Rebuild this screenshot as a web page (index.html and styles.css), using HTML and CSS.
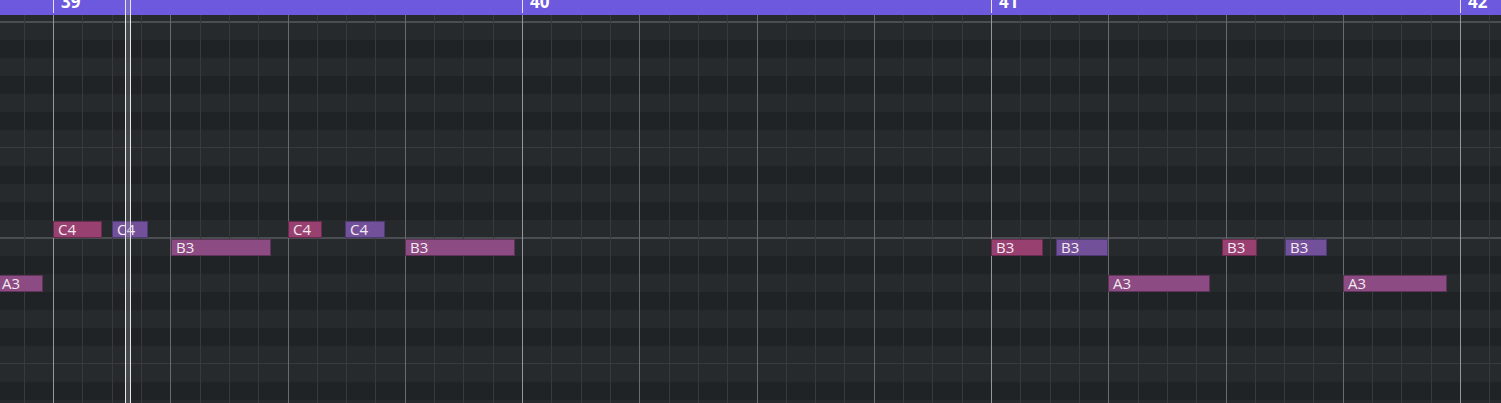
FILE: index.html
```html
<!DOCTYPE html>
<html lang="en">
<head>
    <meta charset="UTF-8">
    <meta name="viewport" content="width=device-width, initial-scale=1.0">
    <title>Piano Roll</title>
    <link rel="stylesheet" href="styles.css">
</head>
<body>
    <div class="roll">
        <!-- 小节标尺 -->
        <div class="ruler" id="ruler"></div>

        <div class="grid">
            <div class="rows" id="rows"></div>
            <div class="cols" id="cols"></div>
            <div class="notes" id="notes"></div>
        </div>

        <!-- 播放头 -->
        <div class="playhead"></div>
    </div>

    <script>
        const rulerEl = document.getElementById('ruler');
        const rowsEl = document.getElementById('rows');
        const colsEl = document.getElementById('cols');
        const notesEl = document.getElementById('notes');

        const bars = [38, 39, 40, 41, 42];
        const pitches = ['C5', 'B4', 'A#4', 'A4', 'G#4', 'G4', 'F#4', 'F4', 'E4', 'D#4', 'D4', 'C#4',
                         'C4', 'B3', 'A#3', 'A3', 'G#3', 'G3', 'F#3', 'F3', 'E3', 'D#3', 'D3'];

        // 音符：音高, 左边 px, 宽度 px, 颜色
        const notes = [
            ['A3', -3, 46, 'mag'],
            ['C4', 53, 49, 'red'],
            ['C4', 112, 36, 'violet'],
            ['B3', 171, 100, 'mag'],
            ['C4', 288, 34, 'red'],
            ['C4', 345, 40, 'violet'],
            ['B3', 405, 110, 'mag'],
            ['B3', 991, 52, 'red'],
            ['B3', 1056, 52, 'violet'],
            ['A3', 1108, 102, 'mag'],
            ['B3', 1222, 35, 'red'],
            ['B3', 1285, 42, 'violet'],
            ['A3', 1343, 104, 'mag']
        ];

        bars.forEach(n => {
            const mark = document.createElement('div');
            mark.className = 'ruler-bar';
            mark.innerHTML = `<span class="bar-num">${n}</span>`;
            rulerEl.appendChild(mark);

            const bar = document.createElement('div');
            bar.className = 'bar';
            for (let b = 0; b < 4; b++) {
                const beat = document.createElement('div');
                beat.className = 'beat';
                for (let s = 0; s < 4; s++) {
                    const step = document.createElement('div');
                    step.className = 'step';
                    beat.appendChild(step);
                }
                bar.appendChild(beat);
            }
            colsEl.appendChild(bar);
        });

        pitches.forEach(p => {
            const row = document.createElement('div');
            row.className = 'row';
            if (p.includes('#')) row.classList.add('black');
            if (p[0] === 'C' && !p.includes('#')) row.classList.add('c-key');
            if (p[0] === 'B') row.classList.add('b-key');
            if (p[0] === 'F' && !p.includes('#')) row.classList.add('f-key');
            rowsEl.appendChild(row);
        });

        notes.forEach(([pitch, left, width, color]) => {
            const note = document.createElement('div');
            note.className = `note ${color}`;
            note.textContent = pitch;
            note.style.left = `${left}px`;
            note.style.width = `${width}px`;
            note.style.top = `${pitches.indexOf(pitch) * 18 + 1}px`;
            notesEl.appendChild(note);
        });
    </script>
</body>
</html>
```

FILE: styles.css
```css
body {
    margin: 0;
    padding: 0;
    background-color: #222528;
    font-family: "Open Sans", "Noto Sans", sans-serif;
    overflow: hidden;
}
.roll {
    position: relative;
    width: 1501px;
    height: 403px;
    display: flex;
    flex-direction: column;
    overflow: hidden;
}

/* 标尺 */
.ruler {
    flex: 0 0 15px;
    display: flex;
    margin-left: -416px;
    background-color: #6d59dd;
    overflow: hidden;
}
.ruler-bar {
    flex: 0 0 469px;
    box-sizing: border-box;
    height: 13px;
    padding-left: 7px;
    border-left: 1px solid #e4e0f6;
}
.bar-num {
    display: block;
    margin-top: -7px;
    font-size: 17px;
    line-height: 17px;
    font-weight: 700;
    color: #ffffff;
}

/* 网格 */
.grid {
    position: relative;
    flex: 1;
    overflow: hidden;
}
.rows {
    margin-top: -11px;
}
.row {
    height: 18px;
    box-sizing: border-box;
    background-color: #262a2c;
}
.row.black {
    background-color: #202325;
}
.row.c-key {
    border-bottom: 1px solid #4a4e52;
}
.row.b-key {
    border-top: 1px solid #4a4e52;
}
.row.f-key {
    border-bottom: 1px solid #383c3f;
}
.cols {
    position: absolute;
    top: 0;
    bottom: 0;
    left: -416px;
    display: flex;
}
.bar {
    flex: 0 0 469px;
    display: flex;
}
.beat {
    width: 25%;
    display: flex;
}
.step {
    width: 25%;
    box-sizing: border-box;
    border-left: 1px solid #373a3d;
}
.beat .step:first-child {
    border-left-color: #686b6e;
}
.beat:first-child .step:first-child {
    border-left-color: #95979a;
}

/* 音符 */
.notes {
    position: absolute;
    top: -11px;
    left: 0;
    right: 0;
    bottom: 0;
}
.note {
    position: absolute;
    height: 17px;
    box-sizing: border-box;
    padding-left: 4px;
    font-size: 15px;
    line-height: 15px;
    color: #f3e9f1;
    white-space: nowrap;
    border: 1px solid #5e3458;
}
.note.red {
    background-color: #984070;
    border-color: #6a2c4e;
}
.note.violet {
    background-color: #73519a;
    border-color: #4e3a72;
}
.note.mag {
    background-color: #8c4b82;
    border-color: #5e3458;
}

/* 播放头 */
.playhead {
    position: absolute;
    top: 0;
    bottom: 0;
    left: 125px;
    width: 6px;
    box-sizing: border-box;
    border-left: 1px solid #e6e6e8;
    border-right: 1px solid #e6e6e8;
    background-color: rgba(150, 150, 155, 0.3);
}
```
